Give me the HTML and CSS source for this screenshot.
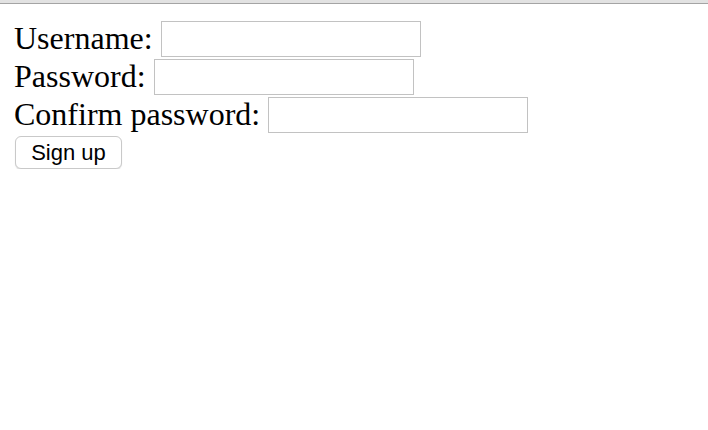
FILE: index.html
```html
<!DOCTYPE html>
<html lang="en">
<head>
  <meta charset="UTF-8">
  <title>Sign up</title>
  <link rel="stylesheet" href="styles.css">
</head>
<body>
  <div class="topbar"></div>

  <form class="signup">
    <div class="row">
      <label for="username">Username:</label>
      <input type="text" id="username">
    </div>
    <div class="row">
      <label for="password">Password:</label>
      <input type="password" id="password">
    </div>
    <div class="row">
      <label for="confirm">Confirm password:</label>
      <input type="password" id="confirm">
    </div>
    <button type="submit">Sign up</button>
  </form>
</body>
</html>
```

FILE: styles.css
```css
body {
  margin: 0;
  background: #fff;
  font-family: "Liberation Serif", "Times New Roman", serif;
}

.topbar {
  height: 3px;
  background: #e2e2e2;
  border-bottom: 1px solid #a4a4a4;
}

.signup {
  display: flex;
  flex-direction: column;
  align-items: flex-start;
  padding: 17px 0 0 14px;
}

.row {
  display: flex;
  align-items: center;
  gap: 8px;
  height: 38px;
}

.row label {
  font-size: 32px;
  color: #000;
  margin-top: -3px;
}

.row input {
  width: 260px;
  height: 36px;
  margin-top: -2px;
  box-sizing: border-box;
  border: 1px solid #c2c2c2;
  padding: 0 6px;
  font-size: 20px;
  outline: none;
}

button {
  margin: 1px 0 0 1px;
  width: 107px;
  height: 33px;
  font-family: "Liberation Sans", Arial, sans-serif;
  font-size: 22px;
  color: #000;
  background: #fff;
  border: 1px solid #c9c9c9;
  border-radius: 6px;
  box-shadow: 0 1px 1px rgba(0, 0, 0, 0.12);
  cursor: pointer;
}
```
